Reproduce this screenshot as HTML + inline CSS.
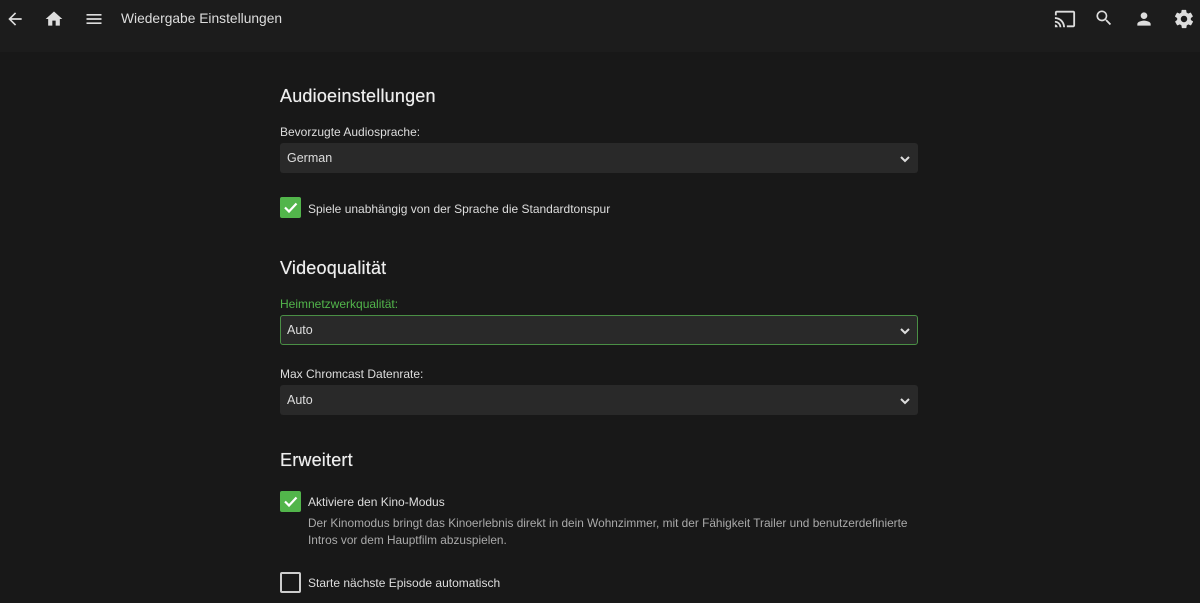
<!DOCTYPE html>
<html><head><meta charset="utf-8"><style>
*{box-sizing:border-box;margin:0;padding:0}
body{width:1200px;height:603px;overflow:hidden;background:#181818;font-family:"Liberation Sans",sans-serif;color:#ddd;position:relative}
.hdr{position:absolute;left:0;top:0;width:1200px;height:52px;background:#1c1c1c}
.a{position:absolute}
.title{left:121px;top:11px;font-size:13.8px;color:#ddd}
h2{position:absolute;left:280px;font-size:18px;font-weight:normal;color:#eee;letter-spacing:.2px;text-shadow:0 0 .5px #eee}
.lbl{position:absolute;left:280px;font-size:12px;color:#ddd}
.sel{position:absolute;left:280px;width:638px;height:30px;background:#292929;border-radius:3px;font-size:12.5px;color:#ddd;padding:8px 0 0 7px}
.sel svg{position:absolute;right:7px;top:10px}
.cb{position:absolute;left:280px;width:21px;height:21px;border-radius:2px;background:#52b54b}
.cb.off{background:none;border:2px solid #ccc}
.ct{position:absolute;left:308px;font-size:12px;color:#ddd}
.desc{position:absolute;left:308px;font-size:11.85px;color:#aaa;line-height:17px}
</style></head><body>
<div class="hdr"></div>
<svg class="a" style="left:5px;top:9px" width="20" height="20" viewBox="0 0 24 24"><path d="M20 11H7.8l5.6-5.6L12 4l-8 8 8 8 1.4-1.4L7.8 13H20z" fill="#ddd"/></svg>
<svg class="a" style="left:44px;top:9px" width="20" height="20" viewBox="0 0 24 24"><path d="M10 20v-6h4v6h5v-8h3L12 3 2 12h3v8z" fill="#ddd"/></svg>
<svg class="a" style="left:84px;top:9px" width="20" height="20" viewBox="0 0 24 24"><path d="M3 18h18v-2H3zm0-5h18v-2H3zm0-7v2h18V6z" fill="#ddd"/></svg>
<div class="a title">Wiedergabe Einstellungen</div>
<svg class="a" style="left:1054px;top:8px" width="22" height="22" viewBox="0 0 24 24"><path d="M21 3H3c-1.1 0-2 .9-2 2v3h2V5h18v14h-7v2h7c1.1 0 2-.9 2-2V5c0-1.1-.9-2-2-2zM1 18v3h3c0-1.66-1.34-3-3-3zm0-4v2c2.76 0 5 2.24 5 5h2c0-3.87-3.130-7-7-7zm0-4v2c4.97 0 9 4.03 9 9h2c0-6.08-4.93-11-11-11z" fill="#ddd"/></svg>
<svg class="a" style="left:1094px;top:8px" width="20" height="20" viewBox="0 0 24 24"><path d="M15.5 14h-.8l-.3-.3A6.5 6.5 0 1 0 9.5 16c1.6 0 3.1-.6 4.2-1.6l.3.3v.8l5 5 1.5-1.5-5-5zm-6 0C7 14 5 12 5 9.5S7 5 9.5 5 14 7 14 9.5 12 14 9.5 14z" fill="#ddd"/></svg>
<svg class="a" style="left:1134px;top:9px" width="20" height="20" viewBox="0 0 24 24"><path d="M12 12c2.2 0 4-1.8 4-4s-1.8-4-4-4-4 1.8-4 4 1.8 4 4 4zm0 2c-2.7 0-8 1.3-8 4v2h16v-2c0-2.7-5.3-4-8-4z" fill="#ddd"/></svg>
<svg class="a" style="left:1173px;top:8px" width="22" height="22" viewBox="0 0 24 24"><path d="M19.4 13c0-.3.1-.6.1-1s0-.7-.1-1l2.1-1.6c.2-.2.2-.4.1-.6l-2-3.5c-.1-.2-.4-.3-.6-.2l-2.5 1c-.5-.4-1.1-.7-1.700-1l-.4-2.600c0-.2-.2-.4-.5-.4h-4c-.2 0-.4.2-.5.4l-.4 2.600c-.6.3-1.200.6-1.700 1l-2.500-1c-.2-.1-.5 0-.6.2l-2 3.500c-.1.2-.1.5.1.6L4.600 11c0 .3-.1.7-.1 1s0 .7.1 1l-2.100 1.600c-.2.2-.2.4-.1.6l2 3.500c.1.2.4.3.6.2l2.500-1c.5.4 1.100.7 1.700 1l.4 2.600c0 .2.2.4.5.4h4c.2 0 .5-.2.5-.4l.4-2.600c.6-.3 1.200-.6 1.700-1l2.500 1c.2.1.5 0 .6-.2l2-3.500c.1-.2.1-.5-.1-.6L19.400 13zM12 15.500c-1.900 0-3.500-1.600-3.500-3.500s1.600-3.500 3.500-3.500 3.500 1.600 3.500 3.500-1.600 3.500-3.500 3.500z" fill="#ddd"/></svg>

<h2 style="top:86px">Audioeinstellungen</h2>
<div class="lbl" style="top:125px">Bevorzugte Audiosprache:</div>
<div class="sel" style="top:143px">German<svg width="12" height="12" viewBox="0 0 12 12"><path d="M2 4l4 4 4-4" stroke="#ddd" stroke-width="2" fill="none"/></svg></div>
<div class="cb" style="top:197px"><svg width="21" height="21" viewBox="0 0 21 21"><path d="M5 10.5l4 4 7.5-8" stroke="#fff" stroke-width="2.2" fill="none"/></svg></div>
<div class="ct" style="top:202px">Spiele unabhängig von der Sprache die Standardtonspur</div>

<h2 style="top:258px">Videoqualität</h2>
<div class="lbl" style="top:297px;color:#52b54b">Heimnetzwerkqualität:</div>
<div class="sel" style="top:315px;border:1px solid #4a8f45;padding-top:7px;padding-left:6px">Auto<svg width="12" height="12" viewBox="0 0 12 12" style="top:9px;right:6px"><path d="M2 4l4 4 4-4" stroke="#ddd" stroke-width="2" fill="none"/></svg></div>
<div class="lbl" style="top:367px">Max Chromcast Datenrate:</div>
<div class="sel" style="top:385px">Auto<svg width="12" height="12" viewBox="0 0 12 12"><path d="M2 4l4 4 4-4" stroke="#ddd" stroke-width="2" fill="none"/></svg></div>

<h2 style="top:450px">Erweitert</h2>
<div class="cb" style="top:491px"><svg width="21" height="21" viewBox="0 0 21 21"><path d="M5 10.5l4 4 7.5-8" stroke="#fff" stroke-width="2.2" fill="none"/></svg></div>
<div class="ct" style="top:495px">Aktiviere den Kino-Modus</div>
<div class="desc" style="top:515px">Der Kinomodus bringt das Kinoerlebnis direkt in dein Wohnzimmer, mit der Fähigkeit Trailer und benutzerdefinierte<br>Intros vor dem Hauptfilm abzuspielen.</div>
<div class="cb off" style="top:572px"></div>
<div class="ct" style="top:576px">Starte nächste Episode automatisch</div>
</body></html>
